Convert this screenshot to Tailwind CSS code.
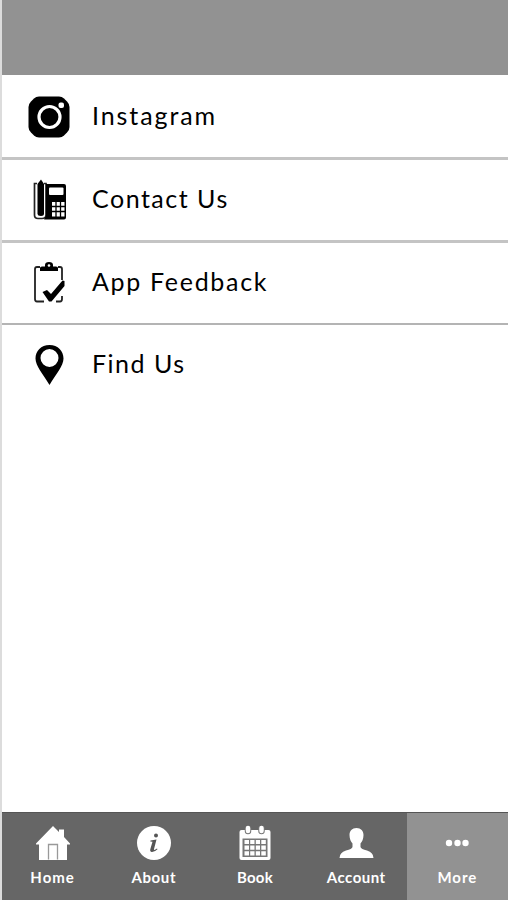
<!DOCTYPE html>
<html lang="en">
<head>
  <meta charset="UTF-8" />
  <meta name="viewport" content="width=device-width, initial-scale=1.0"/>
  <title>More</title>
  <script src="https://cdn.jsdelivr.net/npm/@tailwindcss/browser@4"></script>
</head>
<body class="bg-white text-black font-['Lato',sans-serif]">
  <div class="h-[900px] flex flex-col border-l-2 border-[#dcdcdc] overflow-hidden">

    <!-- Header -->
    <header class="h-[75px] shrink-0 bg-[#929292]"></header>

    <!-- Menu -->
    <main class="flex-1">
      <ul class="text-[25px] leading-8">
        <li class="h-[85px] pt-[1px] pl-[26px] flex items-center border-b-3 border-[#c4c4c4]">
          <svg class="w-[42px] h-[42px]" viewBox="0 0 42 42">
            <path d="M11 .5H31Q34 .5 36 2.500L39 5.500Q41.500 8 41.500 11V31Q41.500 34 39 36.500L36 39.500Q34 41.500 31 41.500H11Q8 41.500 6 39.500L3 36.500Q.5 34 .5 31V11Q.5 8 3 5.500L6 2.500Q8 .5 11 .5Z"/>
            <circle cx="21.500" cy="21" r="10.500" fill="none" stroke="#fff" stroke-width="3.200"/>
            <rect x="30.500" y="6.500" width="5.500" height="5.500" rx="2" fill="#fff"/>
          </svg>
          <span class="ml-[22px] pb-[3px] tracking-[1.9px]">Instagram</span>
        </li>
        <li class="h-[83px] pl-[26px] flex items-center border-b-3 border-[#c4c4c4]">
          <svg class="w-[42px] h-[42px]" viewBox="0 0 42 42">
            <path d="M9 4.500H6.500V36Q6.500 39.500 10 39.500H14Q18 39.500 18 36V4.500H16" fill="none" stroke="#222" stroke-width="1.700"/>
            <path d="M9.500 5L13 .5L16 5V34.500Q16 37 13 37Q9.500 37 9.500 34.500Z"/>
            <path d="M18 5H36Q38 5 38 7V38.500Q38 40.500 36 40.500H16L18 37Z"/>
            <rect x="21" y="8.500" width="14.500" height="7.500" rx="1" fill="#fff"/>
            <rect x="24" y="23" width="12.500" height="14.500" fill="#fff"/>
            <path d="M28 23V38M32.500 23V38M24 27.500H37M24 32.500H37" stroke="#000" stroke-width="1.300"/>
          </svg>
          <span class="ml-[22px] pb-[5px] tracking-[1.5px]">Contact Us</span>
        </li>
        <li class="h-[82px] pl-[26px] flex items-center border-b-2 border-[#b4b4b4]">
          <svg class="w-[42px] h-[42px]" viewBox="0 0 42 42">
            <path d="M12 5H9Q7 5 7 7V37Q7 39.500 9 39.500H16M30 5H32Q34 5 34 7V18M34 34V37Q34 39.500 32 39.500H28" fill="none" stroke="#222" stroke-width="1.800"/>
            <path d="M12 9V6Q12 4.500 14 4.500H17V3Q17 0 21 0Q25 0 25 3V4.500H28Q30 4.500 30 6V9Z"/>
            <circle cx="21" cy="3.500" r="1.300" fill="#fff"/>
            <path d="M14.500 30L19 28L23 32L34.500 18.500L36.500 19V24L23.500 39.500H21Z"/>
          </svg>
          <span class="ml-[22px] pb-[5px] tracking-[1.7px]">App Feedback</span>
        </li>
        <li class="h-[80px] pl-[26px] flex items-center">
          <svg class="w-[42px] h-[42px]" viewBox="0 0 42 42">
            <path fill-rule="evenodd" d="M21.500 1C13 1 7.500 7 7.500 14.500C7.500 22 15 30 21.500 41C28 30 35.500 22 35.500 14.500C35.500 7 30 1 21.500 1ZM21.500 5A9 9 0 1 1 21.500 23A9 9 0 1 1 21.500 5Z"/>
          </svg>
          <span class="ml-[22px] pb-[4px] tracking-[1.5px]">Find Us</span>
        </li>
      </ul>
    </main>

    <!-- Tab bar -->
    <nav class="h-[88px] shrink-0 grid grid-cols-5 bg-[#666] border-t border-[#555] text-white text-[15px] leading-5 font-bold text-center">
      <a class="flex flex-col items-center pt-3">
        <svg class="w-9 h-9 shrink-0" viewBox="0 0 36 36" fill="#fff">
          <path d="M18 1L24 7V4.500H29V12L35 18.500V19.500H32V35H4V19.500H1V18.500Z"/>
          <path d="M13.500 34.500V19.500H22.500V34.500" fill="none" stroke="#999" stroke-width="1.300"/>
        </svg>
        <span class="mt-[6px] tracking-[1px]">Home</span>
      </a>
      <a class="flex flex-col items-center pt-3">
        <svg class="w-9 h-9 shrink-0" viewBox="0 0 36 36">
          <circle cx="18" cy="18" r="17" fill="#fff"/>
          <circle cx="20" cy="10.500" r="2" fill="#555"/>
          <path d="M14.500 15.500L20.500 14.500L18 24Q17.500 26 21 23.500L21.500 24.200Q18 27.500 15.500 27Q13.500 26.500 14.500 23.500L16.500 16.800L14.300 16.500Z" fill="#555"/>
        </svg>
        <span class="mt-[6px] tracking-[0.6px]">About</span>
      </a>
      <a class="flex flex-col items-center pt-3">
        <svg class="w-9 h-9 shrink-0" viewBox="0 0 36 36">
          <rect x="2.500" y="5" width="31" height="30" rx="2" fill="#fff"/>
          <path d="M11 4V6M24.500 4V6" stroke="#777" stroke-width="6.500" stroke-linecap="round"/>
          <path d="M11 3V6M24.500 3V6" stroke="#fff" stroke-width="4.500" stroke-linecap="round"/>
          <rect x="5.500" y="13.500" width="25" height="18.500" fill="#777"/>
          <g fill="#fff">
            <path d="M7.500 15H12V19H7.500ZM13.200 15H17.500V19H13.200ZM18.800 15H23V19H18.800ZM24.300 15H28.800V19H24.300Z"/>
            <path d="M7.500 20.500H12V24.700H7.500ZM13.200 20.500H17.500V24.700H13.200ZM18.800 20.500H23V24.700H18.800ZM24.300 20.500H28.800V24.700H24.300Z"/>
            <path d="M7.500 26.200H12V30.500H7.500ZM13.200 26.200H17.500V30.500H13.200ZM18.800 26.200H23V30.500H18.800ZM24.300 26.200H28.800V30.500H24.300Z"/>
          </g>
        </svg>
        <span class="mt-[6px] tracking-[0.2px]">Book</span>
      </a>
      <a class="flex flex-col items-center pt-3">
        <svg class="w-9 h-9 shrink-0" viewBox="0 0 36 36" fill="#fff">
          <path d="M18.500 3C23 3 25.500 6 25.500 10C25.500 14 24 17 22.500 18.500V22Q23 24 29 25.500Q35.500 27.500 35.500 33H1.500Q1.500 27.500 8 25.500Q14 24 14.500 22V18.500C13 17 11.500 14 11.500 10C11.500 6 14 3 18.500 3Z"/>
        </svg>
        <span class="mt-[6px] tracking-[0.5px]">Account</span>
      </a>
      <a class="flex flex-col items-center pt-3 bg-[#929292]">
        <svg class="w-9 h-9 shrink-0" viewBox="0 0 36 36" fill="#fff">
          <circle cx="10" cy="18" r="3.200"/>
          <circle cx="18.500" cy="18" r="3.200"/>
          <circle cx="26.500" cy="18" r="3.200"/>
        </svg>
        <span class="mt-[6px] tracking-[1px]">More</span>
      </a>
    </nav>
  </div>
</body>
</html>
